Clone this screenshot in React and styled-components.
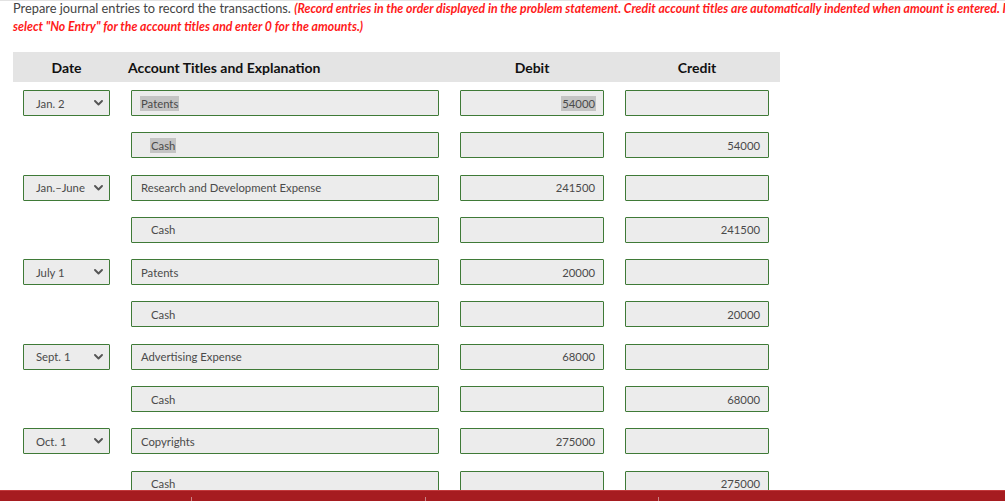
import styled, { createGlobalStyle } from "styled-components";

const GlobalStyle = createGlobalStyle`
  html, body {
    margin: 0;
    padding: 0;
    background: #ffffff;
    overflow: hidden;
  }
  body {
    font-family: Lato, "Open Sans", sans-serif;
  }
`;

const Page = styled.div`
  width: 1005px;
  height: 501px;
  overflow: hidden;
  border-top: 1px solid #e2e2e2;
  box-sizing: border-box;
`;
const Instructions = styled.div`
  margin-top: -1px;
  padding-left: 13px;
  font-size: 12.8px;
  line-height: 16.5px;
  white-space: nowrap;
  color: #444444;
`;
const Note = styled.span`
  color: #ff1a1a;
  font-style: italic;
  font-weight: 700;
  font-size: 12.3px;
`;
const Table = styled.div`
  margin-top: 17px;
  margin-left: 13px;
  width: 767px;
`;
const Grid = styled.div`
  display: grid;
  grid-template-columns: 87px 308px 144px 144px;
  column-gap: 21px;
  padding-left: 10px;
  align-items: center;
`;
const Header = styled(Grid)`
  height: 30px;
  background: #e4e4e4;
  font-size: 14px;
  font-weight: 700;
  color: #111111;
`;
const HeadCell = styled.div`
  text-align: ${(p) => (p.left ? "left" : "center")};
  margin-left: ${(p) => (p.left ? "-3px" : "0")};
`;
const Rows = styled.div`
  display: flex;
  flex-direction: column;
  gap: 16.3px;
  padding-top: 8px;
`;
const Field = styled.div`
  height: 26px;
  box-sizing: border-box;
  border: 1px solid #3f7a37;
  border-radius: 1px;
  background: #ececec;
  display: flex;
  align-items: center;
  font-size: 11.3px;
  color: #4a4a4a;
`;
const DateField = styled(Field)`
  justify-content: space-between;
  padding: 0 6px 0 12px;
`;
const AccountField = styled(Field)`
  padding-left: ${(p) => (p.indent ? "18px" : "8px")};
`;
const AmountField = styled(Field)`
  justify-content: flex-end;
  padding-right: 7px;
`;
const Text = styled.span`
  padding: 1px 1px;
  background: ${(p) => (p.selected ? "#c4c4c4" : "transparent")};
`;
const Empty = styled.div`
  height: 26px;
`;
const Footer = styled.div`
  position: fixed;
  left: 0;
  right: 0;
  bottom: 0;
  height: 10px;
  background: #a61c20;
  border-top: 1px solid #c23a3c;
  display: flex;
`;
const FooterCell = styled.div`
  width: ${(p) => p.w}px;
  margin-top: 6px;
  border-left: ${(p) => (p.first ? "none" : "1px solid #c98486")};
`;

const Chevron = () => (
  <svg width="9" height="6" viewBox="0 0 9 6">
    <path
      d="M1 1 L4.5 4.5 L8 1"
      fill="none"
      stroke="#555555"
      strokeWidth="1.9"
      strokeLinecap="round"
      strokeLinejoin="round"
    />
  </svg>
);

const entries = [
  { date: "Jan. 2", account: "Patents", debit: "54000", sel: true, selAmt: true },
  { account: "Cash", credit: "54000", sel: true },
  { date: "Jan.\u2013June", account: "Research and Development Expense", debit: "241500" },
  { account: "Cash", credit: "241500" },
  { date: "July 1", account: "Patents", debit: "20000" },
  { account: "Cash", credit: "20000" },
  { date: "Sept. 1", account: "Advertising Expense", debit: "68000" },
  { account: "Cash", credit: "68000" },
  { date: "Oct. 1", account: "Copyrights", debit: "275000" },
  { account: "Cash", credit: "275000" }
];

const App = () => {
  return (
    <Page>
      <GlobalStyle />
      <Instructions>
        Prepare journal entries to record the transactions.{" "}
        <Note>
          (Record entries in the order displayed in the problem statement.
          Credit account titles are automatically indented when amount is
          entered. If no entry is required for a transaction/event,
        </Note>
        <br />
        <Note>
          select "No Entry" for the account titles and enter 0 for the
          amounts.)
        </Note>
      </Instructions>
      <Table>
        <Header>
          <HeadCell>Date</HeadCell>
          <HeadCell left>Account Titles and Explanation</HeadCell>
          <HeadCell>Debit</HeadCell>
          <HeadCell>Credit</HeadCell>
        </Header>
        <Rows>
          {entries.map((e, i) => (
            <Grid key={i}>
              {e.date ? (
                <DateField>
                  <span>{e.date}</span>
                  <Chevron />
                </DateField>
              ) : (
                <Empty />
              )}
              <AccountField indent={!!e.credit}>
                <Text selected={e.sel}>{e.account}</Text>
              </AccountField>
              <AmountField>
                <Text selected={e.selAmt}>{e.debit || ""}</Text>
              </AmountField>
              <AmountField>
                <Text>{e.credit || ""}</Text>
              </AmountField>
            </Grid>
          ))}
        </Rows>
      </Table>
      <Footer>
        <FooterCell first w={192} />
        <FooterCell w={233} />
        <FooterCell w={233} />
        <FooterCell w={347} />
      </Footer>
    </Page>
  );
};

export default App;
